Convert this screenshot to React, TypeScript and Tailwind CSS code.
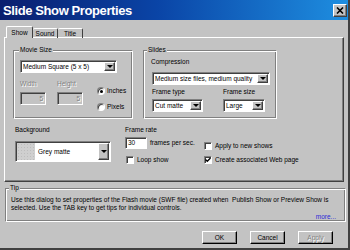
import React from 'react';

const sunken =
  'border border-t-[#808080] border-l-[#808080] border-r-white border-b-white shadow-[inset_1px_1px_0_#404040]';
const raised =
  'border border-t-white border-l-white border-r-[#404040] border-b-[#404040] shadow-[inset_-1px_-1px_0_#808080]';
const etched =
  'border border-t-[#808080] border-l-[#808080] border-r-white border-b-white shadow-[inset_1px_1px_0_#fff,inset_-1px_-1px_0_#808080]';

function Arrow() {
  return <div className="w-0 h-0 border-x-[3px] border-x-transparent border-t-[3px] border-t-black" />;
}

function DropButton({ className }: { className: string }) {
  return (
    <div className={`${raised} bg-[#c3c3c3] flex items-center justify-center shrink-0 ${className}`}>
      <Arrow />
    </div>
  );
}

function Select({ text, className }: { text: string; className: string }) {
  return (
    <div className={`${sunken} bg-white flex items-stretch p-[1px] ${className}`}>
      <div className="flex-1 flex items-center pl-[1px] whitespace-nowrap overflow-hidden leading-[8px]">{text}</div>
      <DropButton className="w-[11px]" />
    </div>
  );
}

function Group({ label, labelLeft, className, children }: { label: string; labelLeft: string; className: string; children?: React.ReactNode }) {
  return (
    <div className={`relative ${etched} ${className}`}>
      <span className={`absolute -top-[5px] ${labelLeft} px-[1px] bg-[#c3c3c3] leading-[8px]`}>{label}</span>
      {children}
    </div>
  );
}

function Check({ checked, label }: { checked?: boolean; label: string }) {
  return (
    <div className="flex items-center h-[8px]">
      <div className={`${sunken} bg-white w-[8px] h-[8px] flex items-center justify-center`}>
        {checked && (
          <svg width="6" height="6" viewBox="0 0 6 6">
            <path d="M0.5 2.5 L2.3 4.3 L5.5 1" stroke="black" strokeWidth="1.3" fill="none" />
          </svg>
        )}
      </div>
      <span className="ml-[3px] leading-[8px] whitespace-nowrap">{label}</span>
    </div>
  );
}

function Radio({ checked, label }: { checked?: boolean; label: string }) {
  return (
    <div className="flex items-center h-[8px]">
      <div className="w-[8px] h-[8px] rounded-full border border-t-[#808080] border-l-[#808080] border-r-white border-b-white bg-white flex items-center justify-center shadow-[inset_1px_1px_0_#404040]">
        {checked && <div className="w-[3px] h-[3px] rounded-full bg-black" />}
      </div>
      <span className="ml-[2px] leading-[8px]">{label}</span>
    </div>
  );
}

function Button({ label, disabled }: { label: string; disabled?: boolean }) {
  return (
    <div
      className={`w-[35px] h-[13px] border border-t-white border-l-white border-r-black border-b-black shadow-[inset_-1px_-1px_0_#808080] flex items-center justify-center leading-[8px] ${
        disabled ? 'text-[#808080] [text-shadow:1px_1px_0_#fff]' : ''
      }`}
    >
      {label}
    </div>
  );
}

export default function App() {
  return (
    <div className="w-[350px] h-[250px] overflow-hidden bg-[#c3c3c3] border-r-2 border-b-2 border-[#404040] font-['Liberation_Sans',Arial,sans-serif] text-[6.5px] text-black">
      {/* title bar */}
      <div className="h-[20px] flex items-center justify-between pl-[3px] pr-[1px] bg-[linear-gradient(to_right,#0a1f6e,#0a44a6_45%,#1e8ee0)]">
        <span className="text-white font-bold text-[13px] tracking-[-0.4px] leading-none">Slide Show Properties</span>
        <div className={`${raised} w-[14px] h-[13px] bg-[#c3c3c3] flex items-center justify-center`}>
          <svg width="8" height="7" viewBox="0 0 8 7">
            <path d="M1 0.5 L7 6.5 M7 0.5 L1 6.5" stroke="black" strokeWidth="1.6" />
          </svg>
        </div>
      </div>

      <div className="px-[4px]">
        {/* tabs */}
        <div className="mt-[6px] ml-[2px] flex items-end -mb-[1px] h-[12px]">
          <div className="relative z-10 h-[12px] w-[27px] bg-[#c3c3c3] border-t border-l border-r border-t-white border-l-white border-r-[#404040] rounded-t-[2px] flex items-center justify-center leading-[8px] pt-[1px]">
            Show
          </div>
          <div className="h-[10px] w-[25px] border-t border-r border-t-white border-r-[#404040] rounded-t-[2px] flex items-center justify-center leading-[8px]">
            Sound
          </div>
          <div className="h-[10px] w-[25px] border-t border-r border-t-white border-r-[#404040] rounded-t-[2px] flex items-center justify-center leading-[8px]">
            Title
          </div>
        </div>

        {/* tab panel */}
        <div className={`${raised} h-[145px] w-[340px]`}>
          <div className="flex mt-[12px] ml-[8px]">
            <Group label="Movie Size" labelLeft="left-[5px]" className="w-[120px] h-[69px]">
              <Select text="Medium Square (5 x 5)" className="mt-[9px] ml-[6px] w-[97px] h-[13px]" />
              <div className="flex mt-[7px]">
                <div className="ml-[6px] w-[26px]">
                  <div className="leading-[8px] h-[8px] text-[#808080] [text-shadow:1px_1px_0_#fff]">Width</div>
                  <div className={`${sunken} mt-[4px] h-[13px] bg-[#c3c3c3] flex items-center justify-end pr-[2px] text-[#808080] [text-shadow:1px_1px_0_#fff]`}>5</div>
                </div>
                <div className="ml-[11px] w-[26px]">
                  <div className="leading-[8px] h-[8px] text-[#808080] [text-shadow:1px_1px_0_#fff]">Height</div>
                  <div className={`${sunken} mt-[4px] h-[13px] bg-[#c3c3c3] flex items-center justify-end pr-[2px] text-[#808080] [text-shadow:1px_1px_0_#fff]`}>5</div>
                </div>
                <div className="ml-[14px] mt-[7px] flex flex-col gap-[8px]">
                  <Radio checked label="Inches" />
                  <Radio label="Pixels" />
                </div>
              </div>
            </Group>

            <Group label="Slides" labelLeft="left-[3px]" className="ml-[10px] w-[134px] h-[69px]">
              <div className="ml-[7px] mt-[7px] leading-[8px]">Compression</div>
              <Select text="Medium size files, medium quality" className="ml-[8px] mt-[6px] w-[118px] h-[13px]" />
              <div className="flex mt-[3px]">
                <div className="ml-[8px] w-[51px]">
                  <div className="leading-[8px]">Frame type</div>
                  <Select text="Cut matte" className="mt-[3px] w-[51px] h-[13px]" />
                </div>
                <div className="ml-[20px] w-[42px]">
                  <div className="leading-[8px]">Frame size</div>
                  <Select text="Large" className="mt-[3px] w-[42px] h-[13px]" />
                </div>
              </div>
            </Group>
          </div>

          <div className="flex mt-[7px] ml-[10px]">
            <div className="w-[96px]">
              <div className="leading-[8px]">Background</div>
              <div className={`${sunken} mt-[7px] h-[21px] bg-white flex items-stretch p-[1px]`}>
                <div className="w-[18px] bg-[#cfcfcf] bg-[radial-gradient(#bdbdbd_0.6px,transparent_0.8px)] bg-[length:3px_3px]" />
                <div className="flex-1 flex items-center ml-[3px] leading-[8px]">Grey matte</div>
                <DropButton className="w-[11px]" />
              </div>
            </div>
            <div className="ml-[14px] w-[79px]">
              <div className="leading-[8px]">Frame rate</div>
              <div className="mt-[3px] flex items-center">
                <div className={`${sunken} w-[22px] h-[12px] bg-white flex items-center pl-[2px] leading-[8px]`}>30</div>
                <span className="ml-[3px] leading-[8px] whitespace-nowrap">frames per sec.</span>
              </div>
              <div className="mt-[7px] ml-[1px]">
                <Check label="Loop show" />
              </div>
            </div>
            <div className="mt-[16px] flex flex-col gap-[6px]">
              <Check label="Apply to new shows" />
              <Check checked label="Create associated Web page" />
            </div>
          </div>
        </div>

        {/* tip */}
        <Group label="Tip" labelLeft="left-[3px]" className="mt-[6px] ml-[1px] w-[341px] h-[34px]">
          <div className="mt-[7px] pl-[5px] leading-[8px] whitespace-nowrap">
            Use this dialog to set properties of the Flash movie (SWF file) created when&nbsp; Publish Show or Preview Show is
            <br />
            selected. Use the TAB key to get tips for individual controls.
          </div>
          <div className="mt-[1px] pr-[9px] text-right leading-[8px] text-[#2a2ad8]">more...</div>
        </Group>

        {/* buttons */}
        <div className="mt-[9px] pr-[11px] flex justify-end gap-[13px]">
          <Button label="OK" />
          <Button label="Cancel" />
          <Button label="Apply" disabled />
        </div>
      </div>
    </div>
  );
}
